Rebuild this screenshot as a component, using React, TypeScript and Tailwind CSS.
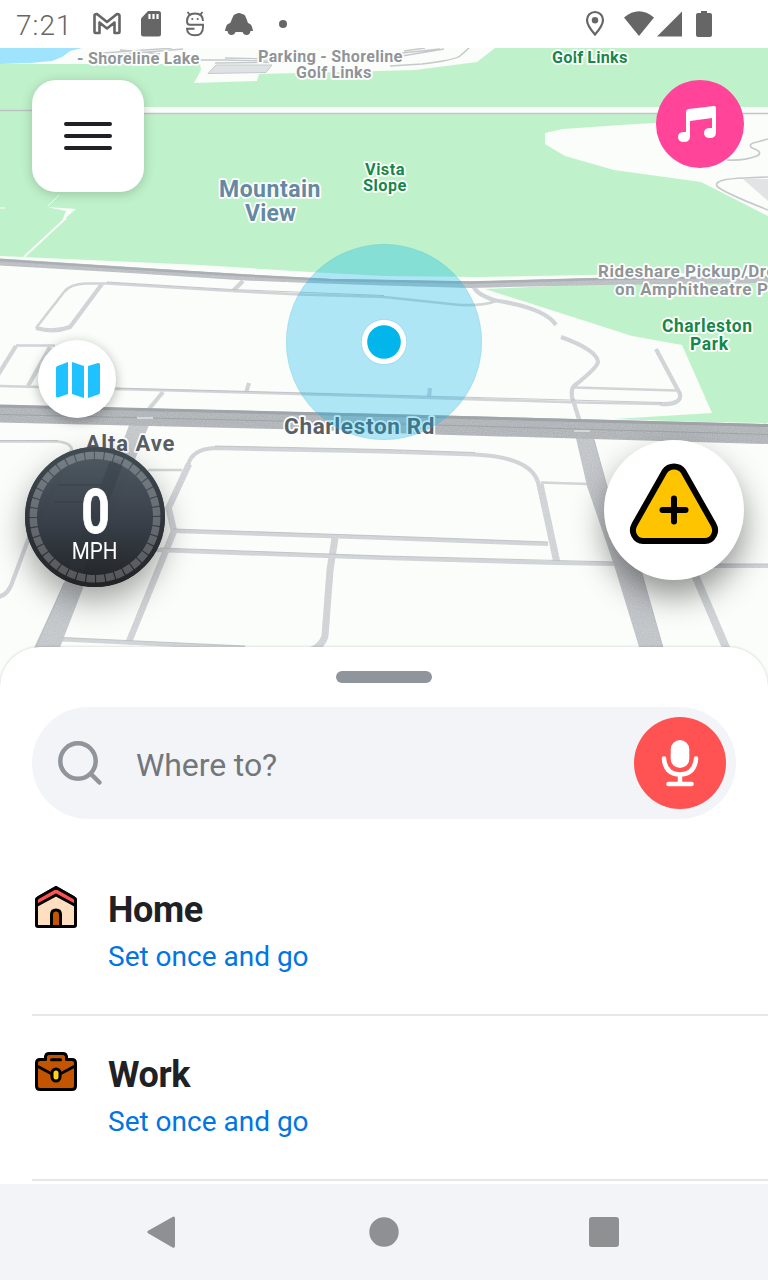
import React from "react";

type Label = { t: string; x: number; y: number; w: number; size: number; fill: string };

const GREY = "#8f9498";
const GREEN = "#15874a";
const BLUE = "#6589a2";
const ROAD = "#585f65";

const labels: Label[] = [
  { t: "- Shoreline Lake", x: 77, y: 64, w: 122.5, size: 16.5, fill: GREY },
  { t: "Parking - Shoreline", x: 258, y: 62, w: 144.5, size: 16.5, fill: GREY },
  { t: "Golf Links", x: 296, y: 78, w: 75.5, size: 16.5, fill: GREY },
  { t: "Golf Links", x: 552, y: 63, w: 75.5, size: 16.5, fill: GREEN },
  { t: "Vista", x: 365, y: 175, w: 39.5, size: 16.5, fill: GREEN },
  { t: "Slope", x: 363, y: 191, w: 43.5, size: 16.5, fill: GREEN },
  { t: "Mountain", x: 219, y: 197, w: 101.5, size: 23, fill: BLUE },
  { t: "View", x: 245, y: 221, w: 51, size: 23, fill: BLUE },
  { t: "Rideshare Pickup/Dro", x: 598, y: 277, w: 178, size: 17, fill: GREY },
  { t: "on Amphitheatre P", x: 615, y: 295, w: 153, size: 17, fill: GREY },
  { t: "Charleston", x: 662, y: 332, w: 90, size: 17.5, fill: GREEN },
  { t: "Park", x: 690, y: 350, w: 38, size: 17.5, fill: GREEN },
  { t: "Charleston Rd", x: 284, y: 434, w: 150.5, size: 22.5, fill: ROAD },
  { t: "Alta Ave", x: 85.5, y: 451, w: 89, size: 22, fill: ROAD },
];

const thinRoads = [
  "M36 328L64 292Q70 284 86 283.500L107 283.500L232 291L300 294.500L384 297L460 305Q485 306 497 300.500",
  "M116 389L245 392.500L384 396.500L580 402.500L662 404",
  "M0 386L120 389",
  "M0 441.500L58 441.500Q73 443 72 452",
  "M148 470L182 470",
  "M575 387.500L676 390.500",
  "M541 482.500L588 484",
  "M16 345.500L55 345.500",
];

const midRoads = [
  "M102 284L70 327Q54 333 36 328",
  "M243 281L233 291",
  "M16 346L-2 375",
  "M50 347L28 386",
  "M163 392L149 409",
  "M249 383L246 393",
  "M430 388L429 397",
  "M473 284Q474 294 496 300.500Q545 308 556 325",
  "M561 337Q597 350 598 362Q597 368 574 386Q571 389 572 397L580 422",
  "M656 349L680 394Q682 405 660 404",
  "M188 465Q192 449 215 448L384 451.500L475 454.500Q530 457 538 482L557 563",
  "M173 531L384 538L548 544",
  "M155 550L384 558L557 563L615 564",
  "M712 566L768 566",
  "M62 639.500L245 648",
  "M72 450L28 540L12 583Q8 595 -2 597",
];

function RoadMap() {
  return (
    <svg className="block h-full w-full" viewBox="0 48 768 640" fill="none">
      <defs>
        <filter id="grain" x="0" y="0" width="100%" height="100%">
          <feTurbulence type="fractalNoise" baseFrequency="0.8" numOctaves="1" result="n" />
          <feColorMatrix in="n" type="matrix" values="0 0 0 0 1  0 0 0 0 1  0 0 0 0 1  0.35 0 0 0 -0.1" result="w" />
          <feComposite in="w" in2="SourceGraphic" operator="in" result="g" />
          <feMerge>
            <feMergeNode in="SourceGraphic" />
            <feMergeNode in="g" />
          </feMerge>
        </filter>
      </defs>
      <rect y="48" width="768" height="640" fill="#fafdf9" />
      {/* parkland and water */}
      <path d="M0 64L200 64L201 70L194 83L257 81L259 74L340 72L415 70L477 62L495 48H768V272L590 275L480 277L384 276L310 272L200 265L0 256Z" fill="#bff2ca" />
      <path d="M0 48H82L70 51L62 57L52 61L30 63L0 64Z" fill="#9fe3fd" />
      <path d="M545 133L563 129L636 124L700 121L720 114H768V216L701 182L614 170L565 156L545 144Z" fill="#fafdf9" />
      <path d="M485 289L600 284L768 282V423L700 422L614 419L712 413L682 345L632 336Z" fill="#bff2ca" />
      <path d="M140 110H768" stroke="#fafdf9" strokeWidth="6" />
      <path d="M140 113.500H768" stroke="#c1c5c6" strokeWidth="1.500" />
      <path d="M0 110.500H40" stroke="#bbc1c1" strokeWidth="1.500" />
      <path d="M59 195L48 206" stroke="#fafdf9" strokeWidth="1" />
      <path d="M47 207L76 209L62 221L66 211Z" fill="#fafdf9" />
      <path d="M66 218L24 257" stroke="#fafdf9" strokeWidth="2" />
      <path d="M0 208H5" stroke="#fafdf9" />
      {/* car parks */}
      <path d="M216 65H272L266 72.500L208 73.500Z" fill="#dfe2e4" stroke="#c5c9cb" />
      <path d="M196 60L225 60L300 62L215 63M103 53L172 48M112 55L183 49M120 50L160 54M225 58L275 59M402 53L440 49M402 56L444 49M404 51L425 48" stroke="#c5c9cb" strokeWidth="1.300" />
      <path d="M390 66L422 64Q455 60 460 56L469 48" stroke="#c5c9cb" strokeWidth="1.500" />
      <path d="M743 179H768V201Z" fill="#e1e4e5" />
      <path d="M768 139L757 142Q747 144 752 148Q764 152 757 156Q744 161 727 160M768 177L745 178Q713 179 717 186Q720 191 768 210" stroke="#c5c9cb" strokeWidth="1.600" />

      <g filter="url(#grain)">
        <g stroke="#cdd1d4">
          {thinRoads.map((d) => (
            <path key={d} d={d} strokeWidth="2.600" />
          ))}
          {midRoads.map((d) => (
            <path key={d} d={d} strokeWidth="4.200" />
          ))}
          <path d="M189 464L168.500 508L174 531L128 644" strokeWidth="6.500" />
          <path d="M335 538L330 570L325 636Q322 646 312 650" strokeWidth="7" />
          <path d="M540 484L557 563" strokeWidth="7" />
          <path d="M692 568L727 650" strokeWidth="8" />
        </g>
        <path d="M131 420H151L85 583L59 650H33L64 583L118 455Z" fill="#c0c4c8" />
        <path d="M575 434L593 434L608 490L641 570L664 650H640L614 565L587 486Z" fill="#bdc1c5" />
        <path d="M0 258.500L130 267L246 274.500L330 279L470 281.500L600 278L768 276V283L600 285L470 288L384 285.500L310 283L246 280.500L130 273L0 265.500Z" fill="#b7bbc0" />
        <path d="M0 405L384 414L768 424V444L434 434.500L300 429.500L0 422.500Z" fill="#acb0b4" />
      </g>
      <g stroke="#b9bdc1" strokeWidth="1" opacity="0.8">
        <path d="M107 282L232 289.500L384 295.500M116 388L384 395L662 402.500M0 440.500H58M173 529L384 536L548 542M160 548L384 556L615 562M215 446L384 449.500L475 452.500M62 637.500L245 646M712 564H768M594 440L608 490M641 570L663 648M64 583L36 648" />
      </g>
      <path d="M0 260L130 268.500L246 275.500L330 280L470 282.500L600 279L768 277" stroke="#aaafb3" strokeWidth="2.500" />
      <path d="M0 406L384 415.500L768 425.500" stroke="#9fa4a8" strokeWidth="3" />
      <path d="M0 414.500L384 423.500L768 434.500" stroke="#9fa4a8" strokeWidth="1" />
      <path d="M137 418H153M574 431H590" stroke="#d3d7da" strokeWidth="2" />

      {labels.map((l) => (
        <text
          key={l.t + l.x}
          x={l.x}
          y={l.y}
          textLength={l.w}
          fill={l.fill}
          stroke="#fdfefd"
          strokeWidth="3.500"
          strokeLinejoin="round"
          paintOrder="stroke"
          fontFamily="Roboto, sans-serif"
          fontWeight="700"
          fontSize={l.size}
        >
          {l.t}
        </text>
      ))}

      {/* position accuracy and marker */}
      <circle cx="384" cy="342" r="98" fill="#00b4ec" fillOpacity="0.300" />
      <circle cx="384" cy="342" r="97.500" stroke="#7fbfd0" strokeOpacity="0.200" />
      <circle cx="384" cy="342" r="23" fill="#4aa9c8" fillOpacity="0.200" />
      <circle cx="384" cy="342" r="22.300" fill="#fff" />
      <circle cx="384" cy="342" r="16.800" fill="#02b6ec" />
    </svg>
  );
}

function StatusBar() {
  return (
    <header className="flex h-12 shrink-0 items-center bg-white pl-4 text-[#666666]">
      <span className="w-[76px] pt-[3px] text-[28px] leading-8 font-light tracking-[1px]">7:21</span>
      <svg className="h-12 w-[200px]" viewBox="92 0 200 48" fill="none">
        <path d="M94.500 15.500Q94.500 14 97 14L107 22L117 14Q119.500 14 119.500 16V32Q119.500 33 118.500 33H114.500V22.500L107 28.500L99.500 22.500V33H95.500Q94.500 33 94.500 32Z" stroke="currentColor" strokeWidth="2.600" strokeLinejoin="round" />
        <path d="M148 11H158.500Q161 11 161 13.500V34Q161 36.500 158.500 36.500H143.500Q141 36.500 141 34V18.500Z" fill="currentColor" />
        <path d="M149.500 14V19M153.500 14V19M157.500 14V19" stroke="#fff" strokeWidth="2.200" />
        <path d="M203 21Q203 13.500 195 13.500Q187 13.500 187 21.500Q187 24.800 190 24.800H203V27Q203 35.300 195 35.300Q187.300 35.300 187 28.800H194.500M187.500 12L190 15M202.500 12L200 15" stroke="currentColor" strokeWidth="1.900" />
        <circle cx="192.300" cy="19" r="1.100" fill="currentColor" />
        <circle cx="197.700" cy="19" r="1.100" fill="currentColor" />
        <path d="M231.500 20L233.500 15.500Q234 14 236 14Q239 12 242 14Q244 14 245 15.500L247 20Q247.500 23.500 250 24Q252 25 253 31H250.500Q250 35 246.500 35Q243.500 35 242.500 32H235.500Q234.500 35 231.500 35Q228 35 227.500 31H225Q226 25 228 24Q230.800 23.500 231.500 20Z" fill="currentColor" />
        <circle cx="283" cy="24" r="4" fill="currentColor" />
      </svg>
      <svg className="ml-auto h-12 w-[188px]" viewBox="580 0 188 48" fill="none">
        <path d="M595 34.500Q587 25.500 587 20A8 8 0 0 1 603 20Q603 25.500 595 34.500Z" stroke="currentColor" strokeWidth="2.200" />
        <circle cx="595" cy="20.300" r="3.200" fill="currentColor" />
        <path d="M624 17.500Q639 5 654 17.500L639 36Z" fill="currentColor" />
        <path d="M682 11.500V36.500H657Z" fill="currentColor" />
        <path d="M701 11H707V13H710Q712 13 712 15V35Q712 37 710 37H698Q696 37 696 35V15Q696 13 698 13H701Z" fill="currentColor" />
      </svg>
    </header>
  );
}

function Speedometer() {
  return (
    <div className="absolute top-[399px] left-[25px] h-[140px] w-[140px] rounded-full shadow-[0_14px_32px_rgba(0,0,0,0.36)]">
      <svg className="block h-full w-full" viewBox="0 0 140 140" fill="none">
        <defs>
          <linearGradient id="dial" x1="0" y1="0" x2="0" y2="1">
            <stop offset="0" stopColor="#4a565e" stopOpacity="0.97" />
            <stop offset="0.5" stopColor="#373e48" stopOpacity="0.98" />
            <stop offset="1" stopColor="#202225" />
          </linearGradient>
          <linearGradient id="rim" x1="0" y1="0" x2="0" y2="1">
            <stop offset="0" stopColor="#404b53" />
            <stop offset="1" stopColor="#222427" />
          </linearGradient>
        </defs>
        <circle cx="70" cy="70" r="70" fill="url(#dial)" />
        <path d="M86 14L98 14L58 122L44 122ZM33 38H78M29 55H70M92 102H125" fill="#2f363d" stroke="#2f363d" strokeWidth="2" opacity="0.300" />
        <circle cx="70" cy="70" r="67.500" stroke="url(#rim)" strokeWidth="5" />
        <circle cx="70" cy="70" r="61.750" stroke="#fff" strokeOpacity="0.230" strokeWidth="7.500" pathLength="400" strokeDasharray="8.800 1.200" />
      </svg>
      <div className="absolute inset-0 flex flex-col items-center text-white">
        <span className="mt-[34px] scale-x-[0.82] text-[61px] leading-[62px] font-bold [-webkit-text-stroke:0.8px_white]">0</span>
        <span className="-mt-[4px] scale-x-[0.86] text-2xl leading-6">MPH</span>
      </div>
    </div>
  );
}

function HomeIcon() {
  return (
    <svg className="h-[42px] w-[42px]" viewBox="0 0 42 42" fill="none" stroke="#000" strokeWidth="3" strokeLinejoin="round" strokeLinecap="round">
      <path d="M1.500 14Q1.500 12.500 3 11.700L21 1.500L39 11.700Q40.500 12.500 40.500 14V39Q40.500 40.500 39 40.500H3Q1.500 40.500 1.500 39Z" fill="#ffdfbf" />
      <path d="M1.500 14Q1.500 12.500 3 11.700L21 1.500L39 11.700Q40.500 12.500 40.500 14V19.500L21 9L1.500 19.500Z" fill="#ff5252" />
      <path d="M16.500 40.500V28.500Q16.500 24 21 24Q25.500 24 25.500 28.500V40.500Z" fill="#c45500" />
    </svg>
  );
}

function WorkIcon() {
  return (
    <svg className="h-[42px] w-[42px]" viewBox="0 0 42 42" fill="none" stroke="#000" strokeWidth="3" strokeLinejoin="round" strokeLinecap="round">
      <path d="M5 8.500H10.500V5.500Q11 2.500 14 2.500H28Q31 2.500 31.500 5.500V8.500H37Q40.500 8.500 40.500 12V35Q40.500 38.500 37 38.500H5Q1.500 38.500 1.500 35V12Q1.500 8.500 5 8.500Z" fill="#c45500" />
      <path d="M16.500 8.800H25.500M2 15L16 22.500M40 15L26 22.500" />
      <rect x="17" y="18" width="8" height="12" rx="4" fill="#ffd21e" />
    </svg>
  );
}

function PlaceRow({ title, icon }: { title: string; icon: React.ReactNode }) {
  return (
    <div className="ml-8 flex h-[165px] shrink-0 border-b-2 border-[#e6e7ea] pt-[35px] pl-[3px]">
      <div className="w-[73px]">{icon}</div>
      <div className="flex flex-col">
        <span className="h-12 text-[36px] leading-[48px] font-bold tracking-[-0.4px] text-[#202124]">{title}</span>
        <span className="mt-1 text-[28px] leading-[38px] text-[#0075e3]">Set once and go</span>
      </div>
    </div>
  );
}

export default function App() {
  return (
    <div className="flex h-[1280px] w-[768px] flex-col overflow-hidden bg-white font-[Roboto,sans-serif]">
      <StatusBar />
      <section className="relative h-[640px] shrink-0">
        <RoadMap />
        <button className="absolute top-8 left-8 flex h-28 w-28 flex-col items-center justify-center gap-2 rounded-3xl bg-white shadow-[0_2px_12px_rgba(0,0,0,0.2)]">
          <span className="h-1 w-12 rounded-full bg-[#202124]" />
          <span className="h-1 w-12 rounded-full bg-[#202124]" />
          <span className="h-1 w-12 rounded-full bg-[#202124]" />
        </button>
        <button className="absolute top-8 right-6 h-[88px] w-[88px] rounded-full bg-[#ff4499]">
          <svg className="block h-full w-full" viewBox="0 0 88 88">
            <path d="M30 32Q30 29.500 32.500 29L58 26Q60 26 60 28V52Q60 58 54 58Q48 58 48 53Q48 48 54 48H56V38L34 41V56Q34 62 28 62Q22 62 22 57Q22 52 28 52H30Z" fill="#fff" />
          </svg>
        </button>
        <button className="absolute top-[292px] left-[38px] h-[78px] w-[78px] rounded-full bg-white shadow-[0_3px_12px_rgba(0,0,0,0.3)]">
          <svg className="block h-full w-full" viewBox="0 0 78 78" fill="#1fc2ff">
            <path d="M30 22V54L20 57.500Q18 58 18 56V28Q18 26.500 19.500 26ZM34 22L46 26V58L34 54ZM50 26L60 23Q62 22.500 62 25V52Q62 54 60.500 54.500L50 58Z" />
          </svg>
        </button>
        <Speedometer />
        <button className="absolute top-[392px] right-6 h-[140px] w-[140px] rounded-full bg-white shadow-[0_16px_32px_rgba(0,0,0,0.42)]">
          <svg className="block h-full w-full" viewBox="0 0 140 140" stroke="#000" strokeWidth="6" strokeLinecap="round">
            <path d="M60.500 31.500Q64 26.500 70 26.500Q76 26.500 79.500 31.500L109.500 84.500Q112.500 90 110 95Q107 101 101 101H39Q33 101 30 95Q27.500 90 30.500 84.500Z" fill="#ffc400" />
            <path d="M70 58.500V81.500M58.500 70H81.500" fill="none" />
          </svg>
        </button>
      </section>

      <main className="relative -mt-[41px] flex h-[537px] shrink-0 flex-col rounded-t-[40px] bg-white pt-6 shadow-[0_0_3px_rgba(0,0,0,0.2)]">
        <div className="h-3 w-24 shrink-0 self-center rounded-full bg-[#90959c]" />
        <div className="mx-8 mt-6 mb-8 flex h-28 shrink-0 items-center rounded-full bg-[#f2f4f8] pr-2.5 pl-6">
          <svg className="h-12 w-12" viewBox="0 0 48 48" fill="none" stroke="#90959c" strokeWidth="4.500" strokeLinecap="round">
            <circle cx="22" cy="22" r="17.700" />
            <path d="M35 35L43.500 43.500" />
          </svg>
          <span className="ml-8 flex-1 pt-[3px] text-[32px] leading-10 tracking-[-0.1px] text-[#72777c]">Where to?</span>
          <button className="h-[92px] w-[92px] rounded-full bg-[#ff5252]">
            <svg className="block h-full w-full" viewBox="0 0 92 92" fill="none" stroke="#fff" strokeWidth="4.500" strokeLinecap="round">
              <rect x="36.700" y="23" width="18.600" height="28" rx="9.300" fill="#fff" stroke="none" />
              <path d="M30 41.500Q31 57 46 57.500Q61 57 62 41.500M46 58V66M34.500 67H57.500" />
            </svg>
          </button>
        </div>
        <PlaceRow title="Home" icon={<HomeIcon />} />
        <PlaceRow title="Work" icon={<WorkIcon />} />
      </main>

      <nav className="relative h-24 shrink-0 bg-[#f2f4f8]">
        <svg className="block h-full w-full" viewBox="0 0 768 96" fill="#8e9092">
          <path d="M172.500 33L148.500 46.500Q146 48 148.500 49.500L172.500 63.500Q175 64.500 175 62V34.500Q175 31.500 172.500 33Z" />
          <circle cx="384" cy="48" r="14.700" />
          <rect x="589" y="33" width="30" height="30" rx="3" />
        </svg>
      </nav>
    </div>
  );
}
